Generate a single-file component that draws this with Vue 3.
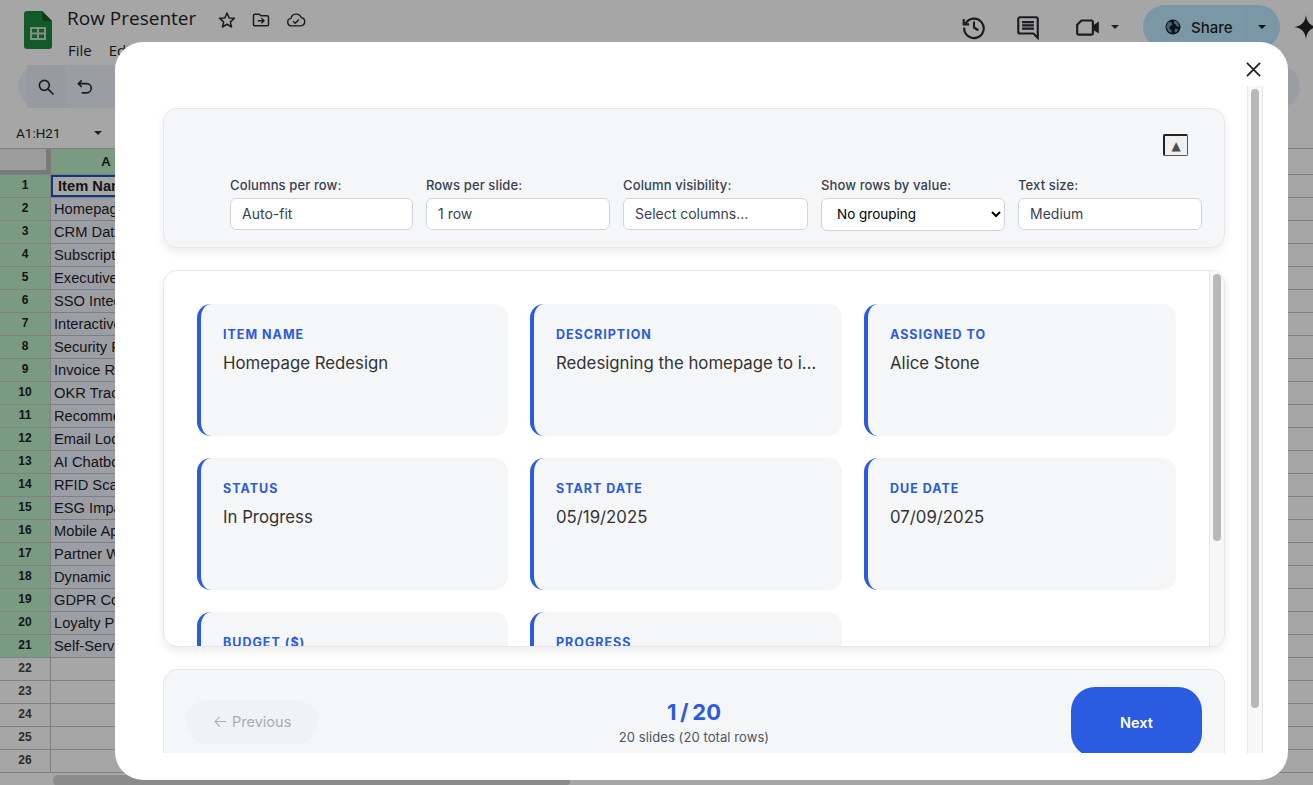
<template>
  <div class="page">
    <!-- spreadsheet behind the dialog -->
    <div class="sheet">
      <header class="top">
        <svg class="logo" viewBox="0 0 28 38">
          <path d="M3 0h15l10 10v25a3 3 0 0 1-3 3H3a3 3 0 0 1-3-3V3a3 3 0 0 1 3-3z" fill="#1f8a3f"/>
          <path d="M18 0l10 10H20a2 2 0 0 1-2-2z" fill="#0f5f2b"/>
          <path d="M6 16h16v13H6z M8 18v3.5h5V18z M15 18v3.5h5V18z M8 23.5V27h5v-3.5z M15 23.5V27h5v-3.5z" fill="#c9dccb" fill-rule="evenodd"/>
        </svg>
        <div class="doc">
          <div class="doc-title">
            <span class="title">Row Presenter</span>
            <svg class="ico star" viewBox="0 0 24 24"><path d="M12 3.6l2.5 5.9 6.4.5-4.9 4.2 1.5 6.2-5.5-3.3-5.5 3.3 1.5-6.2L3.1 10l6.4-.5z" fill="none" stroke="#2b2c2e" stroke-width="1.8" stroke-linejoin="round"/></svg>
            <svg class="ico folder" viewBox="0 0 24 24"><path d="M3 6.5A1.5 1.5 0 0 1 4.5 5H10l2 2h7.5A1.5 1.5 0 0 1 21 8.500v9a1.500 1.500 0 0 1-1.500 1.500h-15A1.500 1.500 0 0 1 3 17.500z M8 13h7 M12.500 10l3 3-3 3" fill="none" stroke="#2b2c2e" stroke-width="1.800"/></svg>
            <svg class="ico cloud" viewBox="0 0 24 24"><path d="M6.500 19a4.500 4.500 0 0 1-.6-8.950A6.500 6.500 0 0 1 18.300 9.100 5 5 0 0 1 18 19z M8.500 13.500l2.500 2.500 4.500-4.500" fill="none" stroke="#2b2c2e" stroke-width="1.700"/></svg>
          </div>
          <div class="menu"><span>File</span><span>Edit</span></div>
        </div>
        <div class="top-right">
          <svg class="ico big" viewBox="0 0 24 24"><path d="M4.300 8.500A9 9 0 1 1 3 12.500 M2.500 4.500v5h5 M12 7v5.500l4 2.500" fill="none" stroke="#2b2c2e" stroke-width="2"/></svg>
          <svg class="ico big" viewBox="0 0 24 24"><path d="M3 4.500A1.500 1.500 0 0 1 4.500 3h15A1.500 1.500 0 0 1 21 4.500V22l-4-4H4.500A1.500 1.500 0 0 1 3 16.500z M6.500 7.500h11 M6.500 10.500h11 M6.500 13.500h11" fill="none" stroke="#2b2c2e" stroke-width="2"/></svg>
          <div class="video">
            <svg class="ico big" viewBox="0 0 24 24"><path d="M2 10l4-4h9a1.500 1.500 0 0 1 1.500 1.500v10A1.500 1.500 0 0 1 15 19H3.500A1.500 1.500 0 0 1 2 17.500z" fill="none" stroke="#2b2c2e" stroke-width="2"/><path d="M16.500 10.500L22 7v11l-5.500-3.500z" fill="#2b2c2e"/></svg>
            <i class="caret"></i>
          </div>
          <div class="share">
            <div class="share-main">
              <svg class="globe" viewBox="0 0 24 24"><circle cx="12" cy="12" r="10" fill="#10202e"/><path d="M6 5l4 1 1 3-3 2-1 3 3 2v4l-4-2-3-6z M14 3l5 3 1 6-3-1-2-3-2-1z M15 14l4 1-3 5-2-2z" fill="#7a97ab"/></svg>
              <span>Share</span>
            </div>
            <div class="share-drop"><i class="caret dark"></i></div>
          </div>
          <svg class="spark" viewBox="0 0 24 24"><path d="M12 0c1 7 4 11 12 12-8 1-11 5-12 12-1-7-4-11-12-12 8-1 11-5 12-12z" fill="#232426"/></svg>
        </div>
      </header>
      <div class="tools">
        <div class="search">
          <svg class="ico tool" viewBox="0 0 24 24"><circle cx="10" cy="10" r="6" fill="none" stroke="#2b2c2e" stroke-width="2"/><path d="M14.500 14.500L21 21" stroke="#2b2c2e" stroke-width="2"/></svg>
        </div>
        <svg class="ico tool" viewBox="0 0 24 24"><path d="M8 4L4 8l4 4 M4 8h10a5 5 0 0 1 0 11H8" fill="none" stroke="#2b2c2e" stroke-width="2"/></svg>
      </div>
      <div class="formula">
        <span>A1:H21</span>
        <i class="caret"></i>
      </div>
      <div class="grid-head">
        <div class="corner"></div>
        <div class="col-a">A</div>
      </div>
      <div v-for="(name, i) in sheetRows" :key="i" class="grid-row">
        <div :class="['row-no', { picked: name }]">{{ i + 1 }}</div>
        <div :class="['cell', { picked: name, first: i === 0 }]">{{ name }}</div>
      </div>
      <div class="hscroll"><div class="hthumb"></div></div>
    </div>
    <div class="dim"></div>

    <!-- dialog -->
    <div class="modal">
      <svg class="close" viewBox="0 0 16 16"><path d="M1 1l14 14M15 1L1 15" stroke="#222" stroke-width="1.900"/></svg>
      <div class="modal-body">
        <section class="panel controls">
          <button class="collapse">▲</button>
          <div class="control-row">
            <label v-for="c in controls" :key="c.label" class="control">
              <span>{{ c.label }}</span>
              <select v-if="c.select">
                <option>{{ c.value }}</option>
              </select>
              <input v-else :value="c.value" readonly />
            </label>
          </div>
        </section>

        <section class="slide">
          <div class="fields">
            <div v-for="f in fields" :key="f.label" class="field">
              <div class="field-label">{{ f.label }}</div>
              <div class="field-value">{{ f.value }}</div>
            </div>
          </div>
          <div class="inner-track"><div class="inner-thumb"></div></div>
        </section>

        <section class="panel footer">
          <button class="prev"><span class="arrow">←</span> Previous</button>
          <div class="counter">
            <div class="count">1 / 20</div>
            <div class="count-sub">20 slides (20 total rows)</div>
          </div>
          <button class="next">Next</button>
        </section>
      </div>
      <div class="track"><div class="thumb"></div></div>
    </div>
  </div>
</template>

<script setup>
const sheetRows = [
  'Item Name', 'Homepage Redesign', 'CRM Data Migration', 'Subscription', 'Executive', 'SSO Integration',
  'Interactive', 'Security Review', 'Invoice Review', 'OKR Tracker', 'Recommendation', 'Email Lookup',
  'AI Chatbot', 'RFID Scanner', 'ESG Impact', 'Mobile App', 'Partner Wiki', 'Dynamic Pricing',
  'GDPR Compliance', 'Loyalty Program', 'Self-Service', '', '', '', '', ''
]

const controls = [
  { label: 'Columns per row:', value: 'Auto-fit' },
  { label: 'Rows per slide:', value: '1 row' },
  { label: 'Column visibility:', value: 'Select columns...' },
  { label: 'Show rows by value:', value: 'No grouping', select: true },
  { label: 'Text size:', value: 'Medium' }
]

const fields = [
  { label: 'Item Name', value: 'Homepage Redesign' },
  { label: 'Description', value: 'Redesigning the homepage to improve conversion' },
  { label: 'Assigned To', value: 'Alice Stone' },
  { label: 'Status', value: 'In Progress' },
  { label: 'Start Date', value: '05/19/2025' },
  { label: 'Due Date', value: '07/09/2025' },
  { label: 'Budget ($)', value: '12000' },
  { label: 'Progress', value: '60%' }
]
</script>

<style>
html, body {
  margin: 0;
  height: 100%;
  overflow: hidden;
}
</style>

<style scoped>
.page {
  position: relative;
  width: 1313px;
  height: 785px;
  overflow: hidden;
  font-family: Inter, "Liberation Sans", sans-serif;
}

.sheet {
  height: 785px;
  background: #fff;
  color: #1f1f1f;
  overflow: hidden;
}

.dim {
  position: absolute;
  inset: 0;
  background: rgba(0, 0, 0, 0.35);
}

.top {
  display: flex;
  height: 60px;
  padding: 11px 0 0 24px;
  box-sizing: border-box;
}

.logo {
  width: 28px;
  height: 38px;
  flex: none;
}

.doc {
  margin-left: 15px;
  margin-top: -4px;
}

.doc-title {
  display: flex;
  align-items: center;
  height: 26px;
}

.title {
  font-family: "Open Sans", sans-serif;
  font-size: 19px;
  width: 149px;
  margin-bottom: 5px;
}

.ico {
  width: 20px;
  height: 20px;
  flex: none;
}

.star { margin-left: 1px; }
.folder { margin-left: 14px; }
.cloud { margin-left: 15px; }

.menu {
  display: flex;
  gap: 17px;
  margin-top: 6px;
  margin-left: 1px;
  font-family: "Open Sans", sans-serif;
  font-size: 15px;
  line-height: 22px;
}

.top-right {
  position: absolute;
  right: -5px;
  top: 5px;
  display: flex;
  align-items: center;
  height: 44px;
}

.big {
  width: 26px;
  height: 26px;
}

.top-right > .big:nth-child(2) { margin-left: 28px; }

.video {
  display: flex;
  align-items: center;
  margin-left: 34px;
  margin-right: 24px;
}

.caret {
  display: inline-block;
  width: 0;
  height: 0;
  margin-left: 10px;
  border-left: 4px solid transparent;
  border-right: 4px solid transparent;
  border-top: 4px solid #333;
}

.share {
  display: flex;
  height: 44px;
  width: 137px;
  border-radius: 22px;
  overflow: hidden;
  background: #bce8ff;
}

.share-main {
  display: flex;
  align-items: center;
  gap: 9px;
  width: 99px;
  padding-left: 21px;
  box-sizing: border-box;
  border-right: 1px solid #d7e6ef;
  font-size: 15px;
  font-weight: 500;
}

.globe {
  width: 18px;
  height: 18px;
}

.share-drop {
  flex: 1;
  display: flex;
  align-items: center;
  padding-left: 6px;
}

.caret.dark { border-top-color: #0b1a25; }

.spark {
  width: 24px;
  height: 24px;
  margin-left: 14px;
}

.tools {
  display: flex;
  align-items: center;
  gap: 10px;
  height: 43px;
  margin: 5px 13px 0 18px;
  padding-left: 9px;
  border-radius: 22px;
  background: #edf2fa;
}

.search {
  display: flex;
  align-items: center;
  justify-content: center;
  width: 38px;
  height: 43px;
  background: #e9eff8;
}

.tool {
  width: 20px;
  height: 20px;
}

.formula {
  display: flex;
  align-items: center;
  height: 41px;
  padding: 9px 0 0 16px;
  border-bottom: 1px solid #c4c7c5;
  box-sizing: border-box;
  font-size: 13.500px;
  font-family: Roboto, sans-serif;
}

.formula span { width: 74px; }
.formula .caret { margin-left: 4px; }

.grid-head,
.grid-row {
  display: flex;
  height: 23px;
  box-sizing: border-box;
  border-bottom: 1px solid #c4c7c5;
  font-family: "Liberation Sans", sans-serif;
}

.grid-head {
  height: 26px;
}

.corner {
  width: 46px;
  height: 21px;
  flex: none;
  background: #f0f0f0;
  border-right: 5px solid #bbb;
  border-bottom: 4px solid #bbb;
}

.col-a {
  flex: none;
  width: 110px;
  background: #bceec8;
  text-align: center;
  font-size: 13px;
  font-weight: 700;
  line-height: 25px;
}

.row-no {
  flex: none;
  width: 50px;
  text-align: center;
  font-size: 12px;
  font-weight: 700;
  line-height: 21px;
  border-right: 1px solid #c4c7c5;
  color: #444;
}

.row-no.picked {
  background: #bceec8;
  color: #222;
}

.cell {
  width: 110px;
  flex: none;
  padding-left: 3px;
  box-sizing: border-box;
  white-space: nowrap;
  overflow: hidden;
  font-size: 14.700px;
  line-height: 22px;
}

.cell.picked { background: #f0f3ff; }

.cell.first {
  background: #fff;
  font-weight: 700;
  padding-left: 7px;
  box-shadow: inset 0 0 0 2px #1a56c4;
}

.hscroll {
  position: absolute;
  left: 53px;
  bottom: -1px;
  width: 517px;
  height: 11px;
}

.hthumb {
  height: 100%;
  border-radius: 5px;
  background: #d6d6d6;
}

.modal {
  position: absolute;
  left: 115px;
  top: 42px;
  width: 1173px;
  height: 738px;
  border-radius: 28px;
  background: #fff;
  overflow: hidden;
}

.close {
  position: absolute;
  right: 27px;
  top: 20px;
  width: 15px;
  height: 15px;
}

.modal-body {
  position: absolute;
  left: 48px;
  top: 46px;
  width: 1062px;
  height: 665px;
  padding-top: 20px;
  box-sizing: border-box;
  display: flex;
  flex-direction: column;
  gap: 22px;
}

.panel {
  flex: none;
  border: 1px solid #e5e7eb;
  border-radius: 14px;
  background: #f5f6f8;
  box-sizing: border-box;
}

.controls {
  height: 140px;
  padding: 25px 22px 0 66px;
  display: flex;
  flex-direction: column;
  align-items: flex-end;
  box-shadow: 0 4px 10px rgba(0, 0, 0, 0.08);
}

.collapse {
  width: 25px;
  height: 22px;
  margin: 0 14px 0 0;
  padding: 0;
  border: 2px solid #222;
  border-right-width: 1px;
  border-bottom-width: 1px;
  border-right-color: #555;
  border-bottom-color: #555;
  border-radius: 2px;
  background: #efefef;
  color: #4b4d52;
  font-size: 12px;
  line-height: 18px;
  font-family: "DejaVu Sans", sans-serif;
}

.control-row {
  width: 100%;
  margin-top: 22px;
  display: grid;
  grid-template-columns: 183px 184px 185px 184px 184px;
  gap: 13px;
}

.control {
  display: flex;
  flex-direction: column;
  gap: 5px;
  font-size: 13px;
  font-weight: 500;
  letter-spacing: 0.12px;
  color: #374151;
  line-height: 15px;
}

.control input,
.control select {
  width: 100%;
  height: 32px;
  box-sizing: border-box;
  border: 1px solid #d1d5db;
  border-radius: 6px;
  background: #fff;
  padding: 0 11px 2px;
  font-family: inherit;
  font-size: 14px;
  color: #374151;
  outline: none;
}

.control select {
  height: 33px;
  font-size: 13.500px;
  color: #000;
}

.slide {
  flex: none;
  position: relative;
  height: 377px;
  border: 1px solid #e5e7eb;
  border-radius: 14px;
  background: #fff;
  box-sizing: border-box;
  overflow: hidden;
  box-shadow: 0 4px 10px rgba(0, 0, 0, 0.08);
}

.fields {
  display: grid;
  grid-template-columns: 311px 312px 312px;
  grid-auto-rows: 132px;
  gap: 22px;
  padding: 33px 0 0 33px;
}

.field {
  border-left: 4px solid #2a5be0;
  border-radius: 14px;
  background: #f5f6f8;
  padding: 23px 25px 0 22px;
  min-width: 0;
}

.field-label {
  font-size: 12.500px;
  font-weight: 700;
  letter-spacing: 1px;
  line-height: 16px;
  text-transform: uppercase;
  color: #2a5be0;
}

.field-value {
  margin-top: 8px;
  font-size: 16.800px;
  line-height: 24px;
  color: #333;
  white-space: nowrap;
  overflow: hidden;
  text-overflow: ellipsis;
}

.inner-track {
  position: absolute;
  right: 0;
  top: 0;
  bottom: 0;
  width: 15px;
  background: #f7f7f7;
  border-left: 1px solid #e8e8e8;
  box-sizing: border-box;
}

.inner-thumb {
  width: 8px;
  height: 267px;
  margin: 3px 0 0 3px;
  border-radius: 4px;
  background: #b8b8b8;
}

.footer {
  height: 106px;
  padding: 17px 22px 0;
  display: grid;
  grid-template-columns: 1fr auto 1fr;
  align-items: start;
  clip-path: inset(0 0 22px 0);
}

.prev {
  justify-self: start;
  width: 132px;
  height: 44px;
  margin-top: 13px;
  padding: 0 0 2px;
  border: none;
  border-radius: 22px;
  background: #f1f2f4;
  color: #a9acb1;
  font-family: inherit;
  font-size: 14.500px;
  font-weight: 400;
}

.arrow {
  font-size: 16px;
  font-weight: 300;
}

.counter {
  text-align: center;
  margin-top: 11px;
}

.count {
  font-size: 22px;
  font-weight: 700;
  line-height: 28px;
  word-spacing: -1.500px;
  color: #2a5be0;
}

.count-sub {
  margin-top: 2px;
  font-size: 13px;
  letter-spacing: 0.08px;
  line-height: 18px;
  color: #4b5563;
}

.next {
  justify-self: end;
  width: 131px;
  height: 70px;
  border: none;
  border-radius: 24px;
  background: #2a5be0;
  color: #fff;
  font-family: inherit;
  font-size: 14.500px;
  font-weight: 600;
}

.track {
  position: absolute;
  left: 1132px;
  top: 44px;
  width: 16px;
  height: 667px;
  box-sizing: border-box;
  background: #f7f7f7;
  border-left: 1px solid #e6e6e6;
  border-right: 1px solid #e6e6e6;
}

.thumb {
  width: 8px;
  height: 619px;
  margin: 3px 0 0 3px;
  border-radius: 4px;
  background: #b8b8b8;
}
</style>
